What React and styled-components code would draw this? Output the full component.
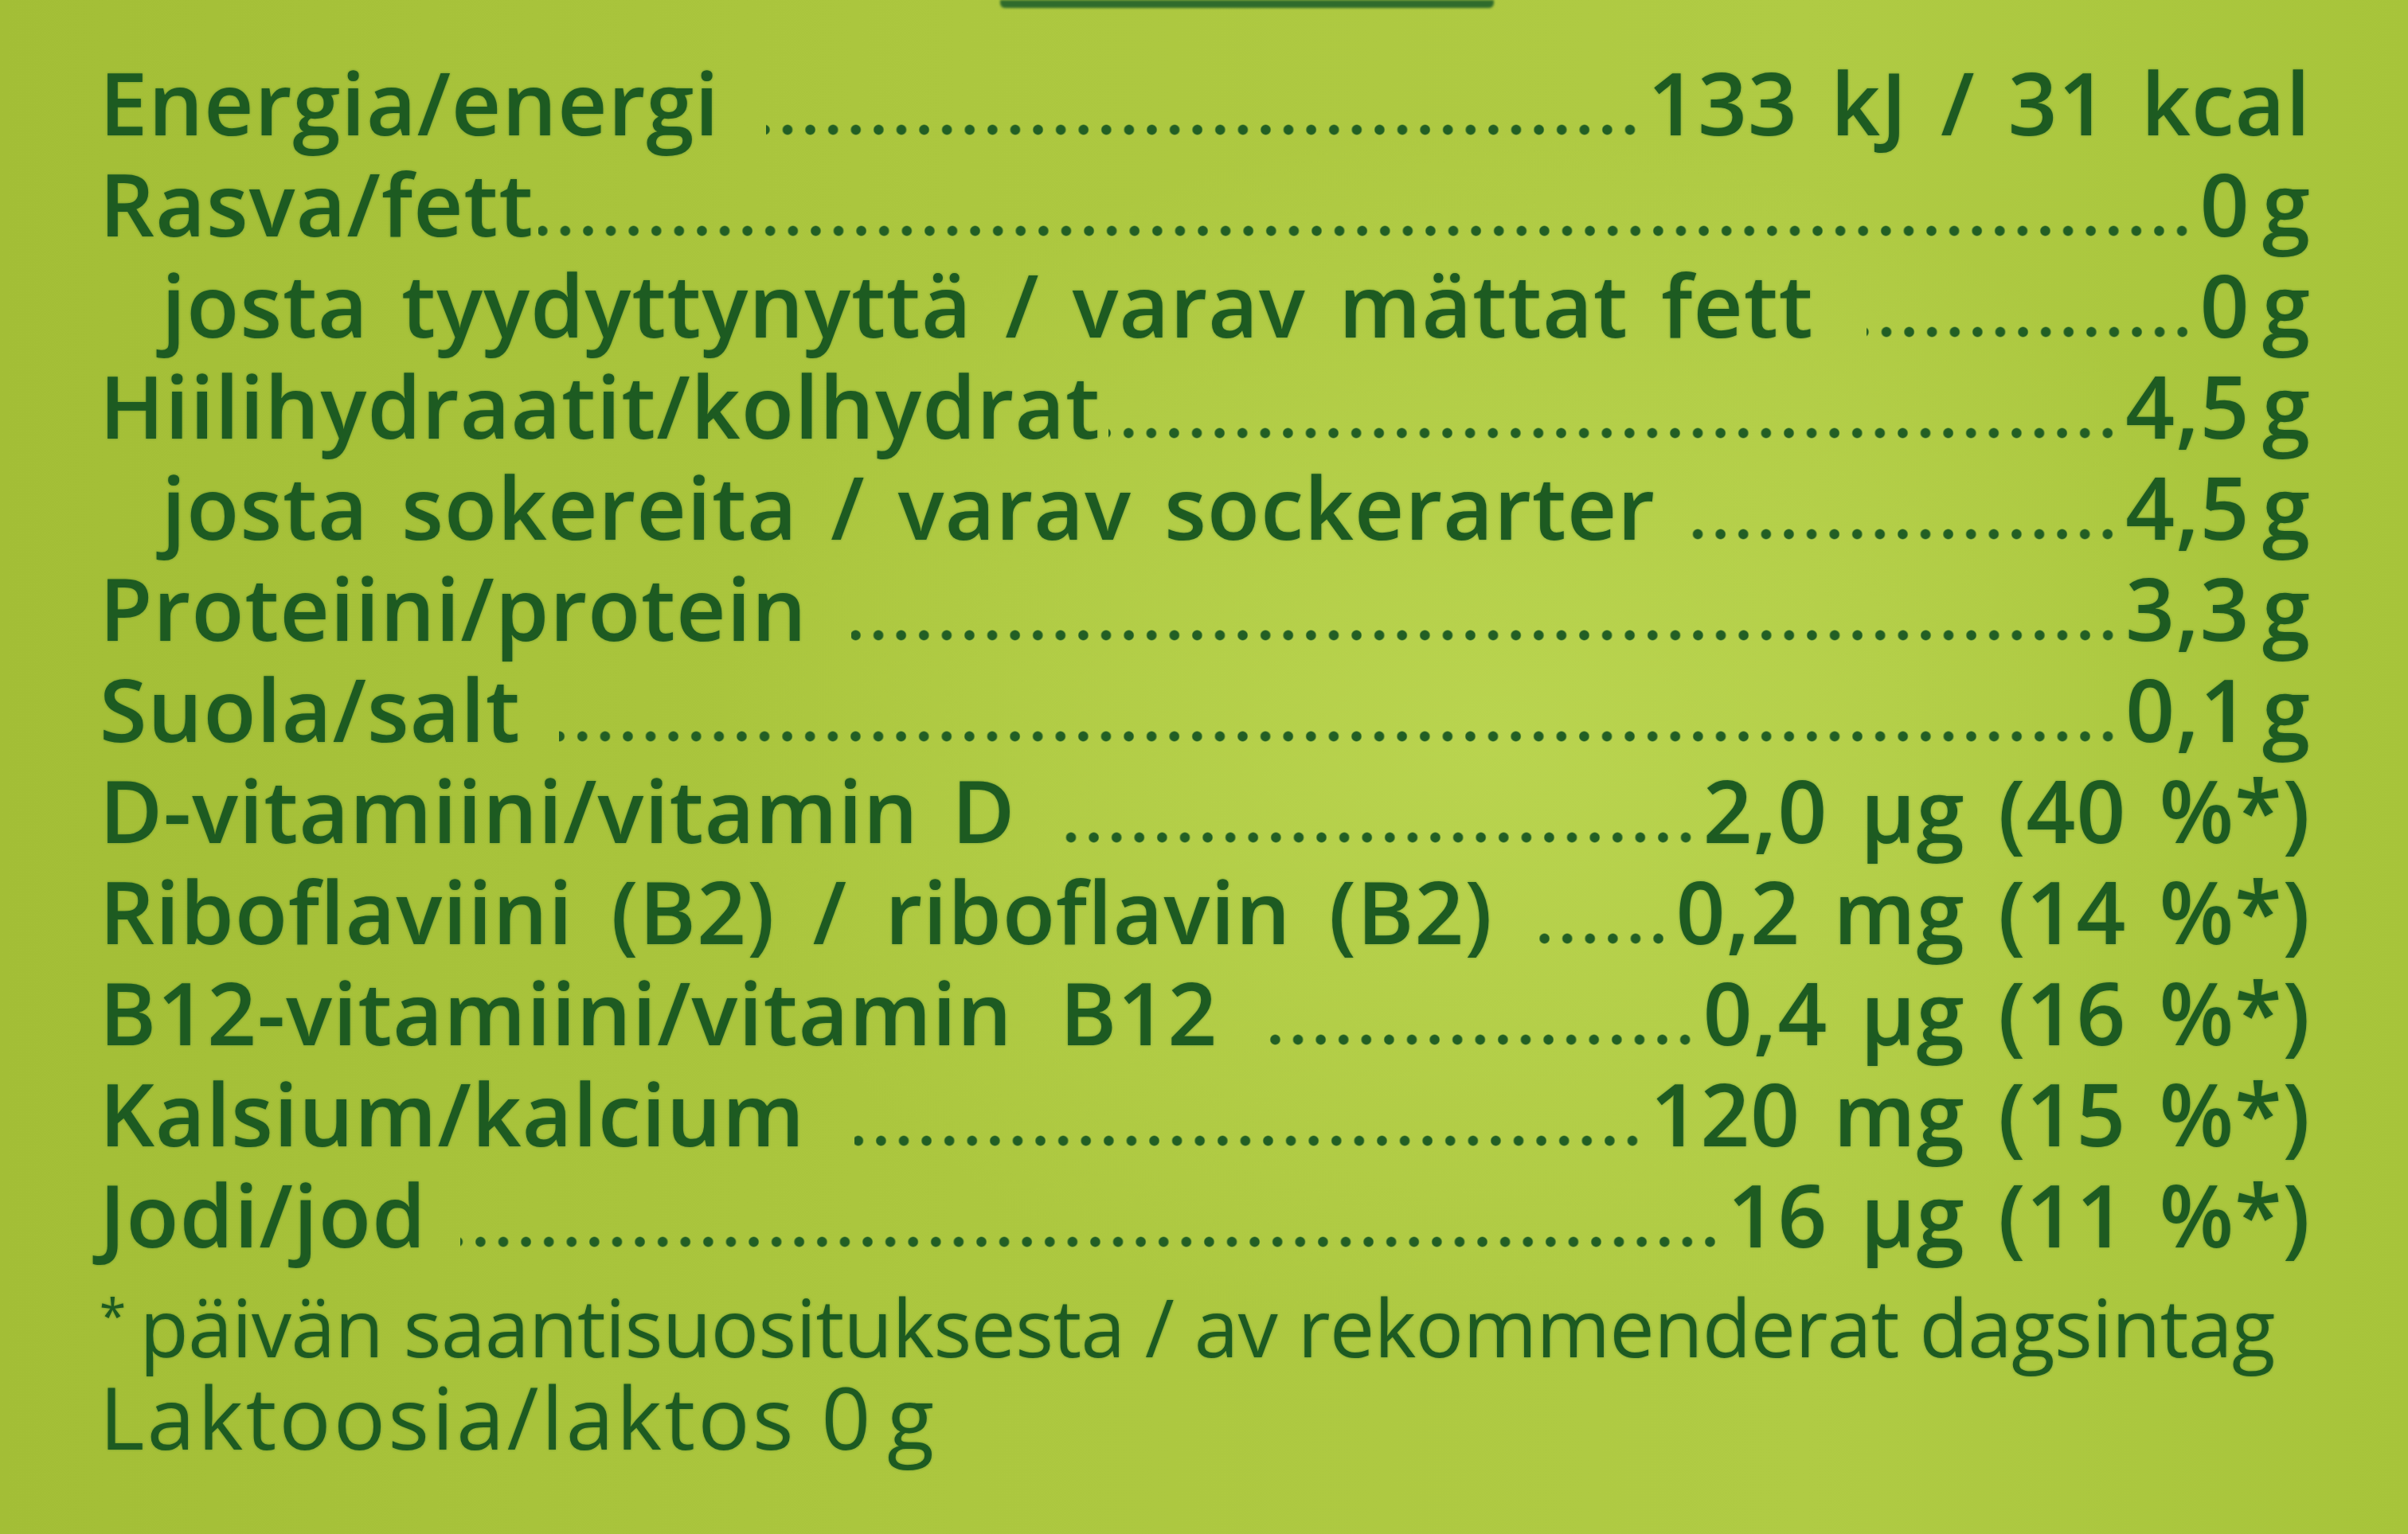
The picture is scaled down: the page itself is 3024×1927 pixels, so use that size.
import React from 'react'
import styled, { createGlobalStyle } from 'styled-components'

const Global = createGlobalStyle`
  html, body {
    margin: 0;
    padding: 0;
  }
  body {
    width: 3024px;
    height: 1927px;
    overflow: hidden;
    background: #a8c33c;
  }
`

const Label = styled.div`
  position: relative;
  width: 3024px;
  height: 1927px;
  box-sizing: border-box;
  padding: 65px 122px 0 125px;
  background:
    radial-gradient(ellipse 1400px 1100px at 62% 48%, rgba(196, 222, 92, 0.5), rgba(196, 222, 92, 0) 70%),
    linear-gradient(90deg, #a3be36 0%, #acc73f 40%, #b0cb44 75%, #a7c43a 100%);
  font-family: "Open Sans", "Liberation Sans", sans-serif;
  color: #1d5b21;
  text-shadow: 0 0 3px rgba(29, 91, 33, 0.45);
`

// dark green band peeking in at the top edge
const TopBand = styled.div`
  position: absolute;
  top: 0;
  left: 1256px;
  width: 620px;
  height: 10px;
  background: #2f6b2c;
  border-radius: 0 0 6px 6px;
  filter: blur(1.5px);
`

const Table = styled.div`
  display: flex;
  flex-direction: column;
`

const Row = styled.div`
  display: flex;
  align-items: baseline;
  height: 127px;
  font-size: 108px;
  line-height: 127px;
  font-weight: 600;
  letter-spacing: 1.2px;
  white-space: nowrap;
  padding-left: ${p => (p.sub ? '78px' : '0')};
`

const Name = styled.span`
  flex: none;
  word-spacing: ${p => p.ws ?? 12}px;
`

const Leader = styled.span`
  flex: 1;
  height: 14px;
  margin: 0 8px 0 ${p => p.gapLeft}px;
  background-image: radial-gradient(circle, #225f24 5.5px, rgba(34, 95, 36, 0) 7px);
  background-size: 28.6px 14px;
  background-repeat: repeat-x;
  background-position: right center;
`

const Value = styled.span`
  flex: none;
  word-spacing: 12px;
`

const Note = styled.div`
  height: 127px;
  font-size: 100px;
  line-height: 127px;
  font-weight: 400;
  letter-spacing: -0.5px;
  white-space: nowrap;
`

const Star = styled.span`
  font-size: 60px;
  vertical-align: 30px;
  margin-right: 18px;
`

const Lactose = styled.div`
  height: 127px;
  font-size: 108px;
  line-height: 127px;
  font-weight: 400;
  letter-spacing: 3.5px;
  white-space: nowrap;
`

const G = '\u202Fg'

const rows = [
  { name: 'Energia/energi', value: '133 kJ / 31 kcal', gl: 58 },
  { name: 'Rasva/fett', value: '0' + G, gl: 6 },
  { name: 'josta tyydyttynyttä / varav mättat fett', value: '0' + G, sub: true, gl: 66 },
  { name: 'Hiilihydraatit/kolhydrat', value: '4,5' + G, gl: 10 },
  { name: 'josta sokereita / varav sockerarter', value: '4,5' + G, sub: true, gl: 44 },
  { name: 'Proteiini/protein', value: '3,3' + G, gl: 55 },
  { name: 'Suola/salt', value: '0,1' + G, gl: 48 },
  { name: 'D-vitamiini/vitamin D', value: '2,0 µg (40 %*)', gl: 58 },
  { name: 'Riboflaviini (B2) / riboflavin (B2)', value: '0,2 mg (14 %*)', gl: 58, ws: 18 },
  { name: 'B12-vitamiini/vitamin B12', value: '0,4 µg (16 %*)', gl: 58, ws: 30 },
  { name: 'Kalsium/kalcium', value: '120 mg (15 %*)', gl: 62 },
  { name: 'Jodi/jod', value: '16 µg (11 %*)', gl: 42 },
]

export default function App() {
  return (
    <>
      <Global />
      <Label>
        <TopBand />
        <Table>
          {rows.map(r => (
            <Row key={r.name} sub={r.sub}>
              <Name ws={r.ws}>{r.name}</Name>
              <Leader gapLeft={r.gl} />
              <Value>{r.value}</Value>
            </Row>
          ))}
          <Note>
            <Star>*</Star>päivän saantisuosituksesta / av rekommenderat dagsintag
          </Note>
          <Lactose>Laktoosia/laktos 0{G}</Lactose>
        </Table>
      </Label>
    </>
  )
}
